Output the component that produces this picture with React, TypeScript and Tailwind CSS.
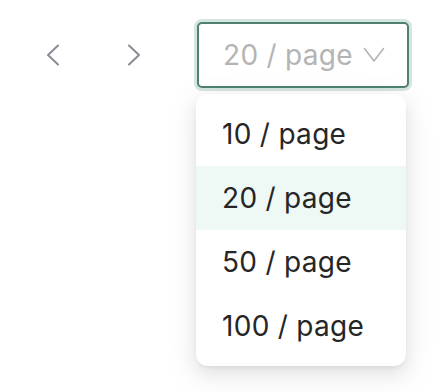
import React from "react";

export default function App() {
  const options = ["10 / page", "20 / page", "50 / page", "100 / page"];
  return (
    <div className="relative w-[446px] h-[392px] bg-white" style={{ fontFamily: "Inter, 'Noto Sans', sans-serif" }}>
      <div className="flex items-center pt-[22px] pl-[41px]">
        <button className="w-6 h-[66px] flex items-center justify-center text-[#8b8b96]">
          <svg width="16" height="22" viewBox="0 0 16 22" fill="none" stroke="currentColor" strokeWidth="2" strokeLinecap="round" strokeLinejoin="round">
            <path d="M13 1.5 L3 11 L13 20.5" />
          </svg>
        </button>
        <button className="ml-[57px] w-6 h-[66px] flex items-center justify-center text-[#8b8b96]">
          <svg width="16" height="22" viewBox="0 0 16 22" fill="none" stroke="currentColor" strokeWidth="2" strokeLinecap="round" strokeLinejoin="round">
            <path d="M3 1.5 L13 11 L3 20.5" />
          </svg>
        </button>
        <div className="ml-[51px] w-[212px] h-[66px] border-2 border-[#4e8171] rounded-[5px] ring-[3px] ring-[#d5e5e0] flex items-center pl-[24px] pr-[22px] bg-white">
          <span className="flex-1 text-[28px] text-[#b4b4b4] leading-none tracking-[0.3px]">20 / page</span>
          <svg width="22" height="16" viewBox="0 0 22 16" fill="none" stroke="#b4b4b4" strokeWidth="1.6" strokeLinecap="round" strokeLinejoin="round">
            <path d="M1.5 1.5 L11 14 L20.5 1.5" />
          </svg>
        </div>
      </div>
      <div className="absolute left-[196px] top-[94px] w-[210px] py-2 bg-white rounded-[12px] shadow-[0_6px_16px_rgba(0,0,0,0.08),0_9px_28px_8px_rgba(0,0,0,0.05),0_3px_6px_-4px_rgba(0,0,0,0.12)]">
        {options.map((o) => (
          <div
            key={o}
            className={`h-16 flex items-center pl-[26px] text-[28px] text-[#262626] leading-none tracking-[0.3px] ${o === "20 / page" ? "bg-[#eef8f5]" : ""}`}
          >
            {o}
          </div>
        ))}
      </div>
    </div>
  );
}
